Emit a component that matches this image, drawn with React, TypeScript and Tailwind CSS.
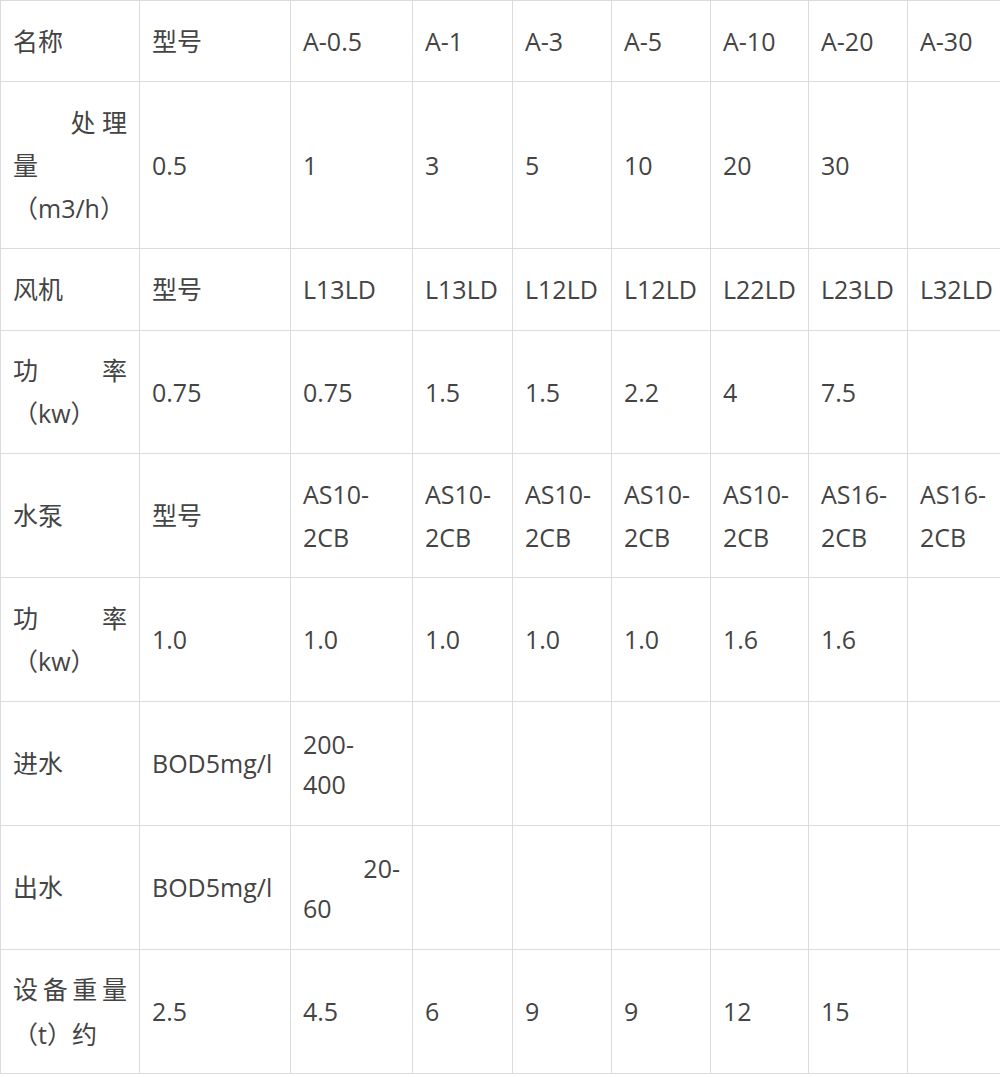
import React from "react";

const cellBase =
  "bg-white flex items-center px-[12px] text-[25px] leading-[43px] text-[#444444] whitespace-nowrap overflow-visible";

function C({ children }: { children?: React.ReactNode }) {
  return <div className={cellBase}>{children}</div>;
}

function Two({ a, b }: { a: string; b: string }) {
  return (
    <div className={cellBase}>
      <div className="flex flex-col">
        <span>{a}</span>
        <span>{b}</span>
      </div>
    </div>
  );
}

function Power() {
  return (
    <div className={cellBase}>
      <div className="flex flex-col w-full">
        <div className="flex justify-between">
          <span>功</span>
          <span>率</span>
        </div>
        <span>（kw）</span>
      </div>
    </div>
  );
}

export default function App() {
  const cols = ["A-0.5", "A-1", "A-3", "A-5", "A-10", "A-20", "A-30"];
  return (
    <div
      className="w-[1000px] h-[1077px] overflow-hidden bg-white"
      style={{ fontFamily: '"Open Sans", "Noto Sans CJK SC", sans-serif' }}
    >
      <div className="w-[1010px] grid grid-cols-[138px_150px_121px_99px_98px_98px_97px_98px_101px] grid-rows-[80px_166px_81px_122px_123px_123px_123px_123px_123px] gap-[1px] p-[1px] bg-[#dcdcdc]">
        {/* Row 1 */}
        <C>名称</C>
        <C>型号</C>
        {cols.map((c) => (
          <C key={c}>{c}</C>
        ))}

        {/* Row 2 */}
        <div className={cellBase}>
          <div className="flex flex-col w-full">
            <span className="text-right">处 理</span>
            <span>量</span>
            <span>（m3/h）</span>
          </div>
        </div>
        {["0.5", "1", "3", "5", "10", "20", "30", ""].map((v, i) => (
          <C key={i}>{v}</C>
        ))}

        {/* Row 3 */}
        <C>风机</C>
        <C>型号</C>
        {["L13LD", "L13LD", "L12LD", "L12LD", "L22LD", "L23LD", "L32LD"].map((v, i) => (
          <C key={i}>{v}</C>
        ))}

        {/* Row 4 */}
        <Power />
        {["0.75", "0.75", "1.5", "1.5", "2.2", "4", "7.5", ""].map((v, i) => (
          <C key={i}>{v}</C>
        ))}

        {/* Row 5 */}
        <C>水泵</C>
        <C>型号</C>
        {["AS10-", "AS10-", "AS10-", "AS10-", "AS10-", "AS16-", "AS16-"].map((v, i) => (
          <Two key={i} a={v} b="2CB" />
        ))}

        {/* Row 6 */}
        <Power />
        {["1.0", "1.0", "1.0", "1.0", "1.0", "1.6", "1.6", ""].map((v, i) => (
          <C key={i}>{v}</C>
        ))}

        {/* Row 7 */}
        <C>进水</C>
        <C>BOD5mg/l</C>
        <div className={cellBase}>
          <div className="flex flex-col leading-[40px]">
            <span>200-</span>
            <span>400</span>
          </div>
        </div>
        {Array.from({ length: 6 }).map((_, i) => (
          <C key={i} />
        ))}

        {/* Row 8 */}
        <C>出水</C>
        <C>BOD5mg/l</C>
        <div className={cellBase}>
          <div className="flex flex-col w-full leading-[40px]">
            <span className="text-right">20-</span>
            <span>60</span>
          </div>
        </div>
        {Array.from({ length: 6 }).map((_, i) => (
          <C key={i} />
        ))}

        {/* Row 9 */}
        <div className={cellBase}>
          <div className="flex flex-col w-full leading-[45px]">
            <div className="flex justify-between">
              <span>设</span>
              <span>备</span>
              <span>重</span>
              <span>量</span>
            </div>
            <span>（t）约</span>
          </div>
        </div>
        {["2.5", "4.5", "6", "9", "9", "12", "15", ""].map((v, i) => (
          <C key={i}>{v}</C>
        ))}
      </div>
    </div>
  );
}
